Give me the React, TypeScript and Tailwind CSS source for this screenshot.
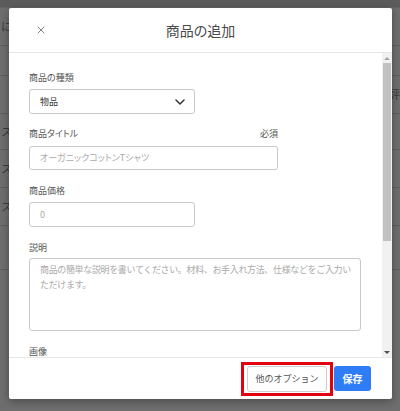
import { X, ChevronDown } from 'lucide-react';

const font = { fontFamily: '"Noto Sans CJK JP", "Noto Sans", sans-serif' };

const BgRow = ({ left, right, h }: { left?: string; right?: string; h: string }) => (
  <div className={`flex items-center justify-between border-b border-[#5f5f5f] text-[11px] text-[#3a3a3a] ${h}`}>
    <span className="pl-[1px]">{left}</span>
    <span className="pr-[0px]">{right}</span>
  </div>
);

const App = () => {
  return (
    <div className="relative w-[400px] h-[411px] overflow-hidden bg-[#6e6e6e]" style={font}>
      {/* page behind the overlay */}
      <div className="flex flex-col">
        <div className="h-[8px] bg-[#5c5c5c] border-b border-[#666]" />
        <BgRow left="に" h="h-[38px]" />
        <BgRow h="h-[30px]" />
        <BgRow right="評" h="h-[38px]" />
        <BgRow left="スト" h="h-[36px]" />
        <BgRow left="スト" h="h-[38px]" />
        <BgRow left="スト" h="h-[38px]" />
        <BgRow h="h-[44px]" />
      </div>

      {/* modal */}
      <div className="absolute left-[9px] top-[8px] w-[383px] h-[391px] bg-white rounded-[2px] shadow-[0_2px_8px_rgba(0,0,0,0.35)] flex flex-col">
        <div className="h-[45px] flex items-center relative border-b border-[#e6e6e6] shrink-0">
          <X className="absolute left-[26px] w-[12px] h-[12px] text-[#555]" strokeWidth={1.5} />
          <div className="w-full text-center text-[14px] text-[#4a4a4a] [font-feature-settings:'palt']">商品の追加</div>
        </div>

        <div className="flex h-[304px] overflow-hidden">
          <div className="flex-1 pl-[20px] pr-[21px] pt-[19px] text-[9px] text-[#555] [font-feature-settings:'palt']">
            <div className="leading-[12px] mb-[5px]">商品の種類</div>
            <div className="w-[166px] h-[25px] border border-[#c9c9c9] rounded-[3px] flex items-center justify-between pl-[10px] pr-[6px] text-[#333]">
              <span>物品</span>
              <ChevronDown className="w-[16px] h-[16px] text-[#333]" strokeWidth={2.2} />
            </div>

            <div className="flex justify-between w-[249px] leading-[12px] mt-[14px] mb-[6px]">
              <span>商品タイトル</span>
              <span>必須</span>
            </div>
            <div className="w-[249px] h-[24px] border border-[#c9c9c9] rounded-[3px] flex items-center pl-[10px] text-[#aaa]">
              オーガニックコットンTシャツ
            </div>

            <div className="leading-[12px] mt-[15px] mb-[5px]">商品価格</div>
            <div className="w-[166px] h-[25px] border border-[#c9c9c9] rounded-[3px] flex items-center pl-[10px] text-[#aaa]">
              0
            </div>

            <div className="leading-[12px] mt-[15px] mb-[4px]">説明</div>
            <div className="w-[332px] h-[73px] border border-[#c9c9c9] rounded-[3px] pl-[10px] pr-[4px] pt-[3px] text-[#aaa] leading-[15px] tracking-[-0.35px] [font-feature-settings:normal]">
              商品の簡単な説明を書いてください。材料、お手入れ方法、仕様などをご入力いただけます。
            </div>

            <div className="leading-[12px] mt-[15px]">画像</div>
          </div>

          {/* scrollbar */}
          <div className="w-[10px] bg-[#f1f1f1] flex flex-col items-center">
            <div className="h-[10px] flex items-center justify-center">
              <div className="w-0 h-0 border-l-[3px] border-r-[3px] border-b-[3px] border-l-transparent border-r-transparent border-b-[#a3a3a3]" />
            </div>
            <div className="w-[8px] h-[178px] bg-[#c1c1c1]" />
            <div className="flex-1" />
            <div className="h-[10px] flex items-center justify-center">
              <div className="w-0 h-0 border-l-[3px] border-r-[3px] border-t-[3px] border-l-transparent border-r-transparent border-t-[#505050]" />
            </div>
          </div>
        </div>

        <div className="flex-1 border-t border-[#e6e6e6] flex items-center justify-end gap-[1px] pr-[21px]">
          <div className="border-[3px] border-[#e3000f] px-[3px] py-[1px]">
            <div className="h-[26px] w-[80px] border border-[#cfcfcf] rounded-[3px] flex items-center justify-center text-[9px] text-[#555] bg-white">
              他のオプション
            </div>
          </div>
          <div className="h-[25px] w-[37px] rounded-[3px] bg-[#2f7df6] text-white text-[10px] font-bold flex items-center justify-center">
            保存
          </div>
        </div>
      </div>
    </div>
  );
};

export default App;
